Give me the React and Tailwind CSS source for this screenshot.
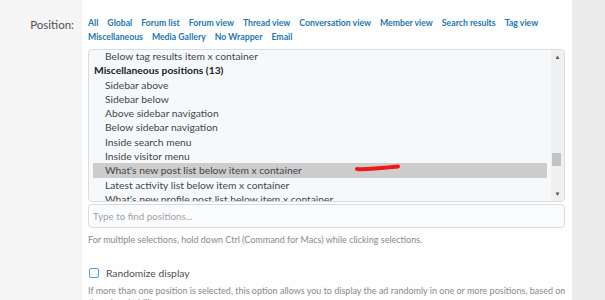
const links = [
  ['All', 'Global', 'Forum list', 'Forum view', 'Thread view', 'Conversation view', 'Member view', 'Search results', 'Tag view'],
  ['Miscellaneous', 'Media Gallery', 'No Wrapper', 'Email'],
]

const rows = [
  { text: 'Below tag results item x container' },
  { text: 'Miscellaneous positions (13)', group: true },
  { text: 'Sidebar above' },
  { text: 'Sidebar below' },
  { text: 'Above sidebar navigation' },
  { text: 'Below sidebar navigation' },
  { text: 'Inside search menu' },
  { text: 'Inside visitor menu' },
  { text: "What's new post list below item x container", selected: true },
  { text: 'Latest activity list below item x container' },
  { text: "What's new profile post list below item x container" },
]

function ListBox() {
  return (
    <div className="relative h-[153px] border border-[#dcdcdc] rounded-sm bg-[#f6f9fc] flex overflow-hidden text-[10.3px]">
      <div className="flex-1 pl-[4px] pr-[4px] -mt-[1px]">
        {rows.map((r, i) => (
          <div
            key={i}
            className={`h-[14.3px] leading-[14.3px] whitespace-nowrap ${
              r.group ? 'pl-[1px] font-bold text-[#222]' : 'pl-[12px] text-[#454545]'
            } ${r.selected ? 'bg-[#cdcdcd]' : ''}`}
          >
            {r.text}
          </div>
        ))}
      </div>
      <div className="w-[13px] bg-[#f0f0f0] flex flex-col items-center justify-between py-[4px]">
        <span className="text-[6px] leading-none text-[#555]">▲</span>
        <div className="flex-1 w-full relative">
          <div className="absolute left-[1px] right-[3px] top-[93px] h-[13px] bg-[#c3c3c3]" />
        </div>
        <span className="text-[6px] leading-none text-[#555]">▼</span>
      </div>
      {/* red mark over the selected row */}
      <svg className="absolute left-[265px] top-[113px]" width="48" height="10" viewBox="0 0 48 10">
        <path d="M3 6 C 14 7, 26 5, 44 3.5" stroke="#f01818" strokeWidth="4" strokeLinecap="round" fill="none" />
      </svg>
    </div>
  )
}

export default function App() {
  return (
    <div className="w-[605px] h-[300px] overflow-hidden flex bg-[#ececec] text-[11px]" style={{ fontFamily: 'Lato, "Open Sans", sans-serif' }}>
      <div className="w-[82px] bg-[#f5f5f5] pr-[8px] pt-[16px] text-right text-[#505050] text-[11.5px]">Position:</div>
      <div className="w-[490px] bg-[#fefefe] pl-[6px] pr-[7px] pt-[16px]">
        <div className="text-[8.7px] font-bold text-[#2577b1] leading-[14px]">
          {links.map((line, i) => (
            <div key={i} className="flex gap-x-[9px] whitespace-nowrap">
              {line.map(l => (
                <span key={l}>{l}</span>
              ))}
            </div>
          ))}
        </div>
        <div className="mt-[5px]">
          <ListBox />
        </div>
        <div className="mt-[2px] h-[24px] border border-[#dcdcdc] rounded-sm bg-[#fbfcfd] px-[4px] flex items-center text-[#a3a3a3] text-[9.8px]">
          Type to find positions...
        </div>
        <div className="mt-[5px] text-[9px] text-[#8a8a8a]">
          For multiple selections, hold down Ctrl (Command for Macs) while clicking selections.
        </div>
        <div className="mt-[19px] flex items-center gap-[7px] pl-[1px]">
          <span className="w-[10px] h-[10px] border border-[#5a9bd5] rounded-[2px] bg-white" />
          <span className="text-[#505050] text-[10.3px]">Randomize display</span>
        </div>
        <div className="mt-[4px] text-[9px] text-[#8a8a8a] leading-[12px] whitespace-nowrap">
          If more than one position is selected, this option allows you to display the ad randomly in one or more positions, based on
          <br />
          the ad probability.
        </div>
      </div>
    </div>
  )
}
